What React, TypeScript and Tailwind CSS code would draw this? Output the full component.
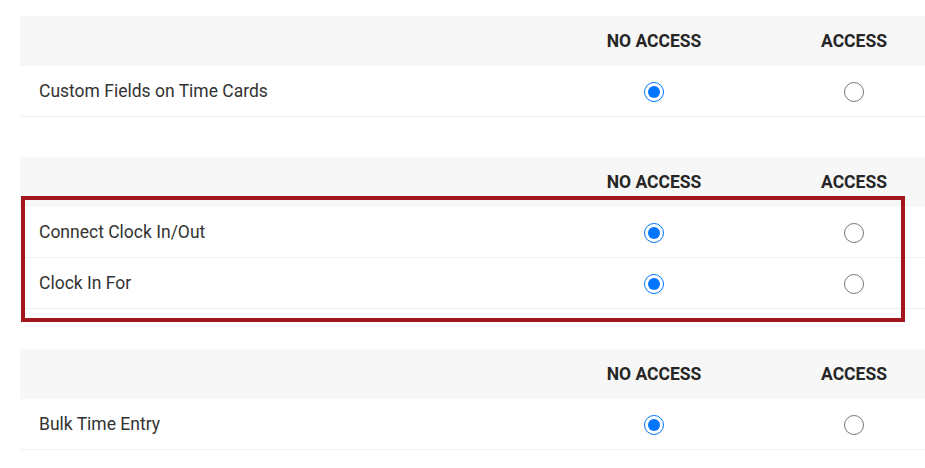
import React from "react";

type Section = {
  id: string;
  rows: { label: string; access: boolean }[];
};

const sections: Section[] = [
  { id: "custom", rows: [{ label: "Custom Fields on Time Cards", access: false }] },
  {
    id: "clock",
    rows: [
      { label: "Connect Clock In/Out", access: false },
      { label: "Clock In For", access: false },
    ],
  },
  { id: "bulk", rows: [{ label: "Bulk Time Entry", access: false }] },
];

function PermissionTable({ section }: { section: Section }) {
  return (
    <div className="w-[934px]">
      <div className="grid h-[50px] grid-cols-[1fr_200px_200px] items-center bg-[#f7f7f7] text-[17.5px] font-bold text-[#262626]">
        <div />
        <div className="text-center">NO ACCESS</div>
        <div className="text-center">ACCESS</div>
      </div>
      {section.rows.map((row, i) => (
        <div
          key={i}
          className="grid h-[51px] grid-cols-[1fr_200px_200px] items-center border-b border-[#f0f0f0] text-[17.5px] text-[#333]"
        >
          <div className="pl-[19px]">{row.label}</div>
          <div className="flex justify-center pt-[2px]">
            <input
              type="radio"
              name={`${section.id}-${i}`}
              defaultChecked={!row.access}
              className="m-0 h-5 w-5"
            />
          </div>
          <div className="flex justify-center pt-[2px]">
            <input
              type="radio"
              name={`${section.id}-${i}`}
              defaultChecked={row.access}
              className="m-0 h-5 w-5"
            />
          </div>
        </div>
      ))}
    </div>
  );
}

export default function App() {
  return (
    <div
      className="relative h-[468px] w-[925px] overflow-hidden bg-white pt-4 pl-5"
      style={{ fontFamily: "Roboto, 'Liberation Sans', sans-serif" }}
    >
      <div className="flex flex-col gap-10">
        {sections.map((s) => (
          <PermissionTable key={s.id} section={s} />
        ))}
      </div>

      {/* highlight box */}
      <div className="pointer-events-none absolute left-[21px] top-[196px] h-[126px] w-[884px] border-4 border-[#a1161f]" />
    </div>
  );
}
